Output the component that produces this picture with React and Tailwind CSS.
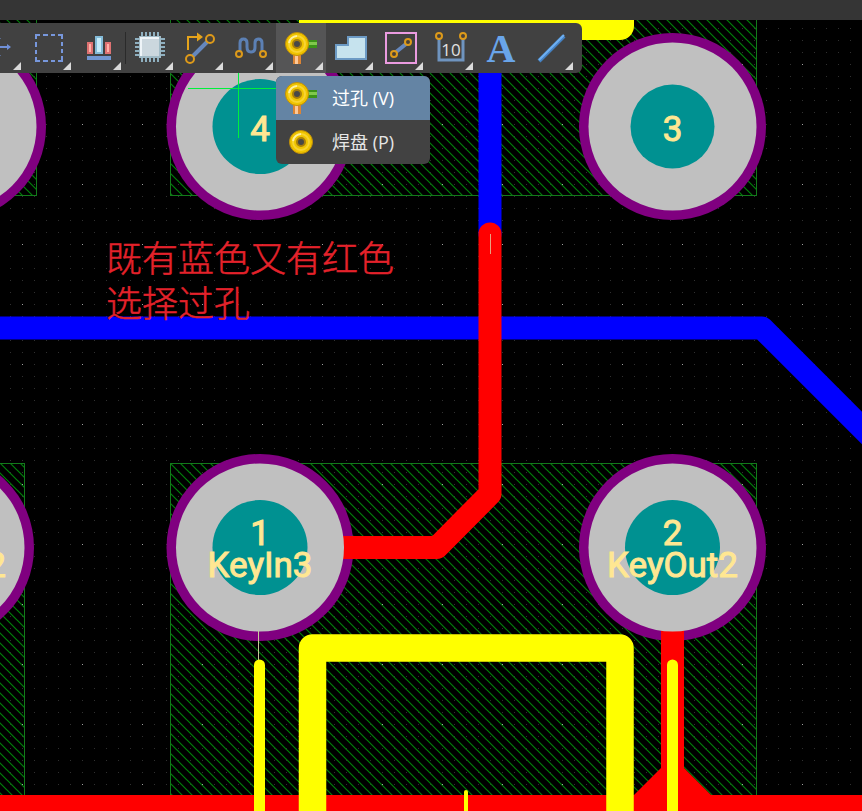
import React from "react";

const BLUE = "#0000ff";
const RED = "#ff0000";
const YELLOW = "#ffff00";

/* ---------- toolbar icons ---------- */

function Icon({ children, height = 50 }) {
  return (
    <svg width="50" height={height} viewBox={`0 0 50 ${height}`} fill="none" aria-hidden="true">
      {children}
    </svg>
  );
}

function Node({ x, y, r = 3 }) {
  return <circle cx={x} cy={y} r={r} stroke="#dd9a1a" strokeWidth="2" fill="#4a4238" />;
}

function Ring({ x, y }) {
  return (
    <g>
      <circle cx={x} cy={y} r="11.5" fill="#efc400" stroke="#c08e08" strokeWidth="1" />
      <circle cx={x} cy={y} r="8" stroke="#f8d433" strokeWidth="2" />
      <path d={`M${x - 8} ${y - 1} a8.500 8.500 0 0 1 8 -7`} stroke="#fff0a0" strokeWidth="2" />
      <circle cx={x} cy={y} r="4" fill="#484848" stroke="#a87f0c" strokeWidth="2" />
    </g>
  );
}

function ViaShape({ y = 21 }) {
  return (
    <g>
      <rect x="30" y={y - 4} width="11" height="8" fill="#3b9318" />
      <rect x="30" y={y - 2} width="11" height="3" fill="#80c84c" />
      <rect x="17" y={y + 10} width="8" height="10" fill="#dc8434" />
      <rect x="19" y={y + 10} width="3" height="10" fill="#fcc898" />
      <Ring x={21} y={y} />
    </g>
  );
}

function MoveIcon() {
  return (
    <Icon>
      <path d="M11 24H36M23 12V36" stroke="#7090d8" strokeWidth="2" />
      <path d="M33 21l4 3-4 3zM14 21l-4 3 4 3zM19 16l4-4 4 4zM19 32l4 4 4-4z" fill="#7090d8" />
    </Icon>
  );
}

function SelectIcon() {
  return (
    <Icon>
      <path
        d="M12 16V12H16M19 12h5M27 12h4M34 12h4v4M38 19v4M38 26v4M38 33v5h-4M31 38h-4M24 38h-5M16 38h-4v-4M12 31v-4M12 24v-5"
        stroke="#7797dc"
        strokeWidth="2"
      />
    </Icon>
  );
}

function AlignIcon() {
  return (
    <Icon>
      <rect x="14" y="20" width="4" height="10" fill="#ffb0a8" stroke="#df7272" strokeWidth="2" />
      <rect x="32" y="20" width="4" height="10" fill="#ffb0a8" stroke="#df7272" strokeWidth="2" />
      <rect x="22" y="14" width="6" height="16" fill="#c6ecfa" stroke="#83bbd8" strokeWidth="2" />
      <rect x="13" y="33" width="24" height="4" fill="#7297d2" />
    </Icon>
  );
}

function ChipIcon() {
  return (
    <Icon>
      <path
        d="M16 9V39M20 9V39M24 9V39M28 9V39M32 9V39M9 16H39M9 20H39M9 24H39M9 28H39M9 32H39"
        stroke="#8fb0c0"
        strokeWidth="2"
      />
      <rect x="14" y="14" width="20" height="20" fill="#cbd7de" stroke="#a0bac6" strokeWidth="2" />
      <path d="M15 33V15H33" stroke="#eef4f8" strokeWidth="2" />
    </Icon>
  );
}

function RouteIcon() {
  return (
    <Icon>
      <path d="M17 33L31 19" stroke="#6587bd" strokeWidth="4" />
      <path d="M12 27V14H22" stroke="#e6a41b" strokeWidth="2" />
      <path d="M21 9.500L27 14L21 18.500Z" fill="#e6a41b" />
      <Node x={14} y={36} r={4} />
      <Node x={34} y={16} r={4} />
    </Icon>
  );
}

function MeanderIcon() {
  return (
    <Icon>
      <path
        d="M14 28V20Q14 16 17.500 16Q21 16 21 20V24Q21 29 25 29Q29 29 29 24V20Q29 16 32.500 16Q36 16 36 20V28"
        stroke="#5c80b4"
        strokeWidth="3"
      />
      <Node x={13} y={31} />
      <Node x={37} y={31} />
    </Icon>
  );
}

function ViaIcon() {
  return (
    <Icon>
      <ViaShape />
    </Icon>
  );
}

function PolygonIcon() {
  return (
    <Icon>
      <path d="M10 22H22V14H40V36H10Z" fill="#c6e3ee" stroke="#6c9ac4" strokeWidth="2" />
    </Icon>
  );
}

function TrackBoxIcon() {
  return (
    <Icon>
      <rect x="10" y="10" width="30" height="30" stroke="#eb9be0" strokeWidth="2" />
      <path d="M20 29L30 21" stroke="#6587bd" strokeWidth="4" />
      <Node x={18} y={31} />
      <Node x={32} y={19} />
    </Icon>
  );
}

function DimensionIcon() {
  return (
    <Icon>
      <path d="M13 16V37H37V16" stroke="#6f94bf" strokeWidth="3" />
      <Node x={13} y={13} />
      <Node x={37} y={13} />
      <text
        x="25"
        y="33"
        textAnchor="middle"
        fill="#e0e0e0"
        className="font-['Open_Sans',sans-serif] text-[17px]"
      >
        10
      </text>
    </Icon>
  );
}

function TextIcon() {
  return (
    <Icon>
      <text
        x="25"
        y="39"
        textAnchor="middle"
        fill="#69a5ea"
        className="font-['Liberation_Serif',serif] text-[40px] font-bold"
      >
        A
      </text>
    </Icon>
  );
}

function LineIcon() {
  return (
    <Icon>
      <path d="M13 38L38 13" stroke="#4582c4" strokeWidth="4" />
      <path d="M13 37L38 12" stroke="#6fb0f2" strokeWidth="2" />
    </Icon>
  );
}

const TOOLS = [
  { name: "移动", icon: MoveIcon, menu: true },
  { name: "选择", icon: SelectIcon, menu: true },
  { name: "对齐", icon: AlignIcon, menu: true },
  { name: "器件", icon: ChipIcon, menu: true, separated: true },
  { name: "布线", icon: RouteIcon, menu: true },
  { name: "等长", icon: MeanderIcon, menu: true },
  { name: "过孔", icon: ViaIcon, menu: true, active: true },
  { name: "铺铜", icon: PolygonIcon, menu: true },
  { name: "走线", icon: TrackBoxIcon, menu: true },
  { name: "尺寸", icon: DimensionIcon, menu: true },
  { name: "文本", icon: TextIcon },
  { name: "线条", icon: LineIcon, menu: true },
];

function ViaMenu() {
  return (
    <div
      role="menu"
      className="absolute left-0 top-full mt-[3px] flex w-[154px] flex-col overflow-hidden rounded-md bg-[#424242] text-[18px] text-[#e6e6e6]"
    >
      <button role="menuitem" className="flex h-11 items-center gap-1.5 bg-[#6484a4] text-white">
        <Icon height={44}>
          <ViaShape y={18} />
        </Icon>
        <span>过孔 (V)</span>
      </button>
      <button role="menuitem" className="flex h-11 items-center gap-1.5">
        <Icon height={44}>
          <Ring x={25} y={22} />
        </Icon>
        <span>焊盘 (P)</span>
      </button>
    </div>
  );
}

function Tool({ tool }) {
  const Glyph = tool.icon;
  return (
    <>
      {tool.separated && <span className="ml-px h-8 w-px bg-[#2a2a2a]" />}
      <div className="relative">
        <button
          aria-label={tool.name}
          aria-haspopup={tool.menu ? "menu" : undefined}
          className={tool.active ? "relative block bg-[#555556]" : "relative block"}
        >
          <Glyph />
          {tool.menu && (
            <svg
              width="8"
              height="8"
              viewBox="0 0 8 8"
              className="absolute bottom-[3px] right-[3px]"
              aria-hidden="true"
            >
              <path d="M8 0V8H0Z" fill="#dadada" />
            </svg>
          )}
        </button>
        {tool.active && <ViaMenu />}
      </div>
    </>
  );
}

/* ---------- board drawing ---------- */

const PADS = [
  { x: -47.5, y: 126.5, hole: 47.5 },
  { x: 260, y: 126.5, hole: 47.5, number: "4" },
  { x: 672.5, y: 126.5, hole: 42, number: "3" },
  { x: -59.5, y: 547.5, hole: 47.5, net: "KeyOut2" },
  { x: 260, y: 547.5, hole: 47.5, number: "1", net: "KeyIn3" },
  { x: 672.5, y: 547.5, hole: 47.5, number: "2", net: "KeyOut2" },
];

const REGIONS = [
  { x: -100.5, y: -10.5, width: 137, height: 206 },
  { x: 170.5, y: -10.5, width: 586, height: 206 },
  { x: -100.5, y: 463.5, width: 125, height: 332 },
  { x: 170.5, y: 463.5, width: 586, height: 332 },
];

function Board() {
  return (
    <svg className="absolute inset-0 h-full w-full" role="img" aria-label="PCB">
      <defs>
        <pattern id="minor" x="10" y="4" width="12" height="12" patternUnits="userSpaceOnUse">
          <rect width="1" height="1" fill="#303030" />
        </pattern>
        <pattern id="major" x="22" y="4" width="60" height="60" patternUnits="userSpaceOnUse">
          <rect width="1" height="1" fill="#a0a0a0" />
        </pattern>
        <pattern id="hatch" x="7" y="0" width="10" height="10" patternUnits="userSpaceOnUse">
          <path d="M-2 -2L12 12M8 -2L12 2M-2 8L2 12" stroke="#008008" strokeWidth="1.200" />
        </pattern>
      </defs>

      <rect width="100%" height="100%" fill="#000000" />
      {REGIONS.map((r, i) => (
        <rect key={i} {...r} fill="url(#hatch)" stroke="#137a1b" />
      ))}
      <rect width="100%" height="100%" fill="url(#minor)" />
      <rect width="100%" height="100%" fill="url(#major)" />

      {PADS.map((p, i) => (
        <circle key={i} cx={p.x} cy={p.y} r="93.5" fill="#800080" />
      ))}

      <g fill="none" strokeWidth="23" strokeLinejoin="round" strokeLinecap="round">
        <path d="M490 0V234" stroke={BLUE} />
        <path d="M-20 328H762L1262 828" stroke={BLUE} />
        <path d="M490 234V494L437 547.500H330" stroke={RED} />
        <path d="M672.500 620V780" stroke={RED} />
      </g>
      <path d="M661 768L634 795H711L684 768Z" fill={RED} />
      <rect y="795" width="100%" height="100%" fill={RED} />

      {PADS.map((p, i) => (
        <g key={i}>
          <circle cx={p.x} cy={p.y} r="84" fill="#c0c0c0" />
          <circle cx={p.x} cy={p.y} r={p.hole} fill="#009191" />
        </g>
      ))}

      <g fill="none" stroke={YELLOW} strokeLinejoin="round" strokeLinecap="round">
        <path d="M313 -20V26H620V-20" strokeWidth="28" />
        <path d="M312.500 2000V648H620V2000" strokeWidth="27.500" />
        <path d="M259.500 665V2000M672.500 665V2000" strokeWidth="11" />
        <path d="M466 792V2000" strokeWidth="4" />
      </g>
      <path d="M258.500 631V660" stroke="#c8c89a" />
      <path d="M490.500 234V254" stroke="#e8a080" />
      <path d="M188 88.500H288M238.500 38V138" stroke="#00f03c" />

      <g
        fill="#ffe792"
        stroke="#ffe792"
        strokeWidth="1"
        textAnchor="middle"
        className="font-['Roboto',sans-serif] text-[35px]"
      >
        {PADS.map((p, i) => (
          <g key={i}>
            {p.number && (
              <text x={p.x} y={p.net ? 545 : 141}>
                {p.number}
              </text>
            )}
            {p.net && (
              <text x={p.x} y="577">
                {p.net}
              </text>
            )}
          </g>
        ))}
      </g>

      <g
        fill="#e4222b"
        stroke="#e4222b"
        strokeWidth="0.500"
        className="font-['Noto_Sans_CJK_SC',sans-serif] text-[36px] font-light"
      >
        <text x="106" y="272">
          既有蓝色又有红色
        </text>
        <text x="106" y="317">
          选择过孔
        </text>
      </g>
    </svg>
  );
}

export default function App() {
  return (
    <main className="relative flex h-screen w-full flex-col overflow-hidden bg-black font-['Open_Sans','Noto_Sans_CJK_SC',sans-serif]">
      <Board />
      <header className="relative h-5 w-full shrink-0 bg-[#353535]" />
      <nav
        aria-label="工具栏"
        className="relative mt-[3px] -ml-[26px] flex items-center self-start rounded-md bg-[#414141] pr-1.5"
      >
        {TOOLS.map((t) => (
          <Tool key={t.name} tool={t} />
        ))}
      </nav>
    </main>
  );
}
